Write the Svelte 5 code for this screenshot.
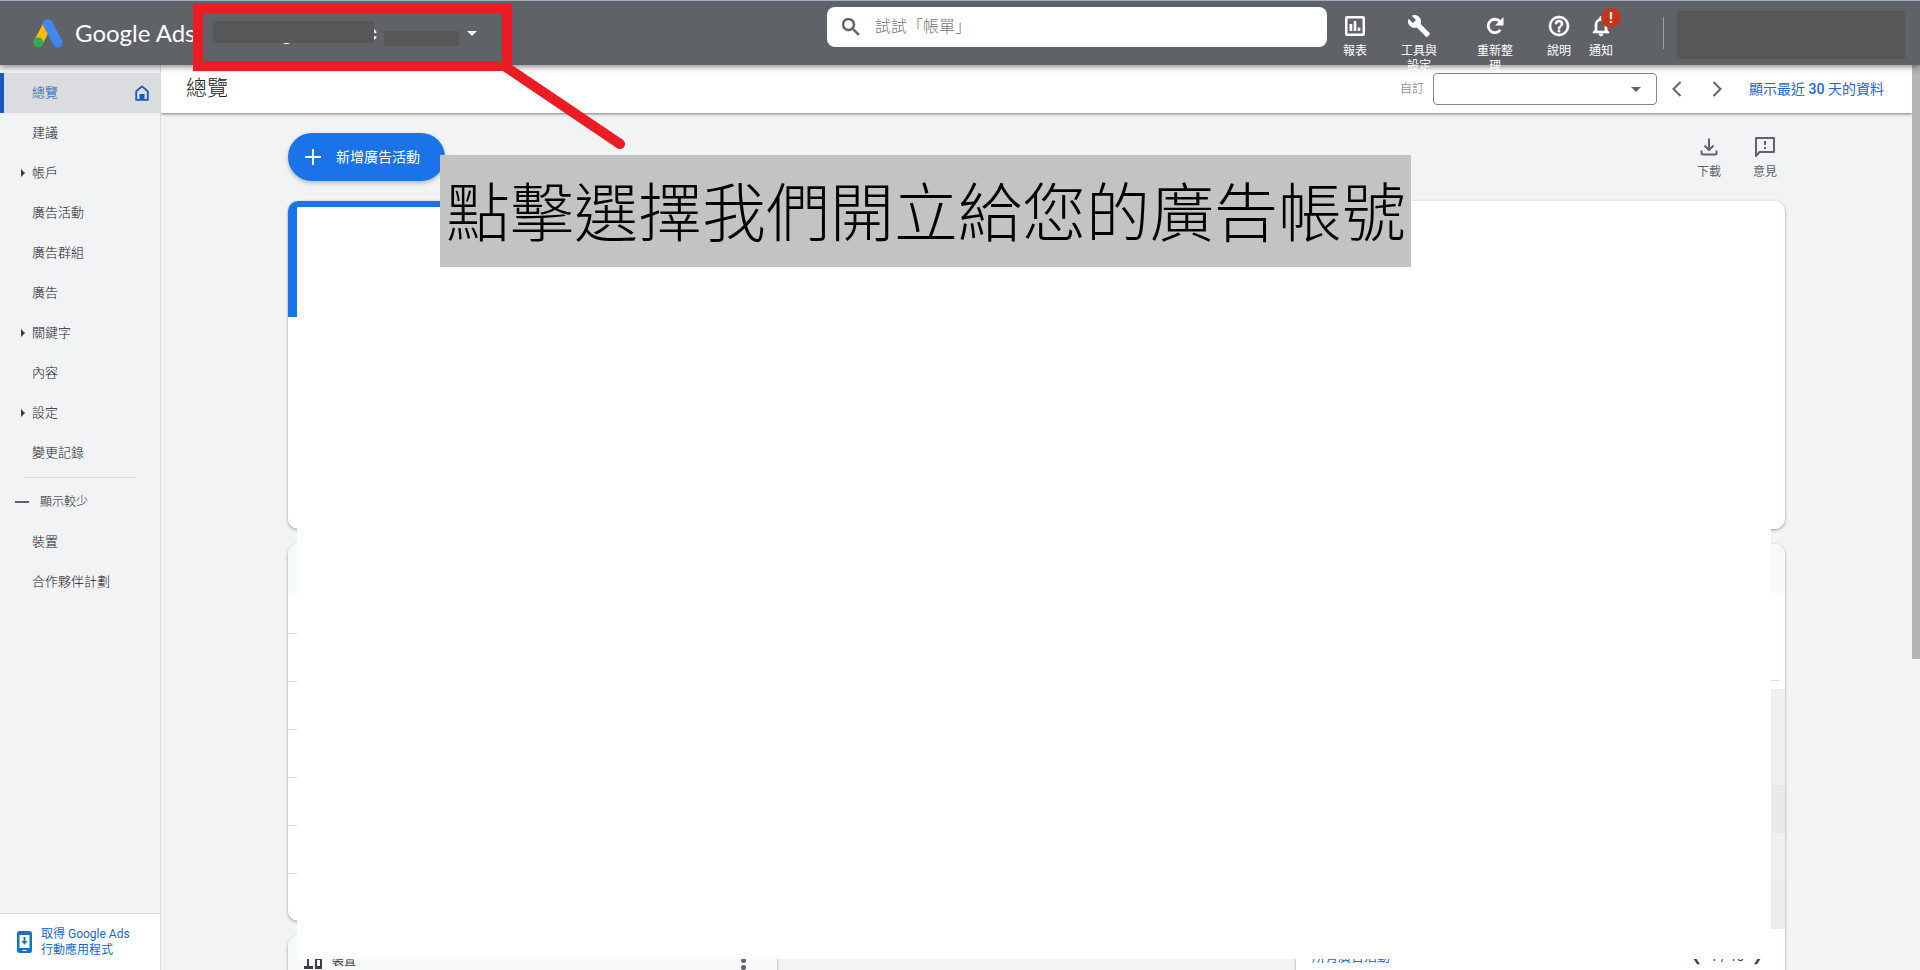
<script lang="ts">
  type NavItem = { label: string; expandable?: boolean; active?: boolean };

  const navItems: NavItem[] = [
    { label: "總覽", active: true },
    { label: "建議" },
    { label: "帳戶", expandable: true },
    { label: "廣告活動" },
    { label: "廣告群組" },
    { label: "廣告" },
    { label: "關鍵字", expandable: true },
    { label: "內容" },
    { label: "設定", expandable: true },
    { label: "變更記錄" },
  ];
  const moreItems: NavItem[] = [{ label: "裝置" }, { label: "合作夥伴計劃" }];
  const tableRows = [1, 2, 3, 4, 5, 6];

  let query = $state("");
  let range = $state("");
</script>

{#snippet navLink(item: NavItem)}
  <a class="nav-item" class:active={item.active} href="#nav">
    <span class="nav-arrow" class:shown={item.expandable}></span>
    <span class="nav-label">{item.label}</span>
    {#if item.active}
      <svg class="home" viewBox="0 0 14 16" width="14" height="16">
        <path d="M1.2 14.8V6.2L7 1.4l5.8 4.8v8.6z" fill="none" stroke="currentColor" stroke-width="1.8" />
        <path d="M4.5 9h5v6h-5z" fill="currentColor" />
      </svg>
    {/if}
  </a>
{/snippet}

<div class="page">
  <header class="topbar">
    <a class="brand" href="#home">
      <svg viewBox="0 0 30 29" width="30" height="29">
        <path d="M14.8 5.2 5.2 23.6" stroke="#fbbc04" stroke-width="9" stroke-linecap="round" />
        <path d="M14.8 5 24.8 23.8" stroke="#4285f4" stroke-width="9.6" stroke-linecap="round" />
        <circle cx="5.2" cy="23.4" r="5" fill="#34a853" />
      </svg>
      <span>Google Ads</span>
    </a>
    <button class="account" aria-label="帳戶">
      <span class="account-name"><span>g</span><span>c</span></span>
      <span class="account-id"></span>
      <span class="caret"></span>
    </button>
    <label class="search">
      <svg viewBox="3 3 18 18" width="18" height="18">
        <path fill="#5f6368" stroke="#5f6368" stroke-width="0.6" d="M15.5 14h-.79l-.28-.27A6.47 6.47 0 0 0 16 9.5 6.5 6.5 0 1 0 9.5 16c1.61 0 3.09-.59 4.23-1.57l.27.28v.79l5 4.99L20.49 19l-4.99-5zm-6 0C7.01 14 5 11.99 5 9.5S7.01 5 9.5 5 14 7.01 14 9.5 11.99 14 9.5 14z" />
      </svg>
      <input type="text" aria-label="搜尋" placeholder="試試「帳單」" bind:value={query} />
    </label>
    <nav class="tools">
      <button class="tool">
        <svg viewBox="0 0 24 24" width="24" height="24">
          <path d="M4 2h16a2 2 0 0 1 2 2v16a2 2 0 0 1-2 2H4a2 2 0 0 1-2-2V4a2 2 0 0 1 2-2zm.5 2.500v15h15v-15z" fill-rule="evenodd" />
          <path d="M6.500 10h2.800v7H6.500zM10.700 7h2.600v10h-2.600zM14.700 13.500h2.600V17h-2.600z" />
        </svg>
        <span>報表</span>
      </button>
      <button class="tool wide">
        <svg viewBox="0 0 24 24" width="24" height="24">
          <path d="M22.7 19l-9.1-9.1c.9-2.3.4-5-1.5-6.9-2-2-5-2.4-7.4-1.3L9 6 6 9 1.6 4.7C.4 7.1.9 10.1 2.9 12.1c1.9 1.9 4.6 2.4 6.9 1.5l9.1 9.1c.4.4 1 .4 1.4 0l2.3-2.3c.5-.4.5-1.1.1-1.4z" />
        </svg>
        <span>工具與設定</span>
      </button>
      <button class="tool wide">
        <svg viewBox="0 0 24 24" width="24" height="24">
          <path d="M17.400 15.800A6.700 6.700 0 1 1 17 7.600" fill="none" stroke="#fff" stroke-width="2.800" />
          <path d="M20.500 3v8.500H12z" />
        </svg>
        <span>重新整理</span>
      </button>
      <button class="tool">
        <svg viewBox="0 0 24 24" width="24" height="24">
          <path stroke="#fff" stroke-width="0.7" d="M11 18h2v-2h-2v2zm1-16a10 10 0 1 0 0 20 10 10 0 0 0 0-20zm0 18c-4.41 0-8-3.59-8-8s3.59-8 8-8 8 3.590 8 8-3.590 8-8 8zm0-14a4 4 0 0 0-4 4h2c0-1.1.9-2 2-2s2 .9 2 2c0 2-3 1.750-3 5h2c0-2.250 3-2.500 3-5a4 4 0 0 0-4-4z" />
        </svg>
        <span>說明</span>
      </button>
      <button class="tool">
        <svg viewBox="0 0 24 24" width="24" height="24">
          <path stroke="#fff" stroke-width="0.7" d="M12 22c1.100 0 2-.9 2-2h-4c0 1.100.9 2 2 2zm6-6v-5c0-3.070-1.630-5.640-4.500-6.320V4a1.500 1.500 0 0 0-3 0v.680C7.640 5.360 6 7.920 6 11v5l-2 2v1h16v-1l-2-2zm-2 1H8v-6c0-2.480 1.510-4.500 4-4.500s4 2.020 4 4.500v6z" />
        </svg>
        <span>通知</span>
        <b class="badge">!</b>
      </button>
    </nav>
    <div class="profile"></div>
  </header>

  <div class="body">
    <aside class="sidebar">
      <nav>
        {#each navItems as item (item.label)}
          {@render navLink(item)}
        {/each}
        <hr />
        <button class="less"><span class="minus"></span>顯示較少</button>
        {#each moreItems as item (item.label)}
          {@render navLink(item)}
        {/each}
      </nav>
      <a class="get-app" href="#app-download">
        <svg viewBox="0 0 15 22" width="15" height="22">
          <rect width="15" height="22" rx="2.500" fill="#1a73c8" />
          <path d="M2.500 4h10v13h-10z" fill="#fff" />
          <path d="M6.600 6h1.800v4h2.200l-3.100 3.800L4.400 10h2.200z" fill="#1a73c8" />
          <path d="M5.500 19h4v1h-4z" fill="#fff" />
        </svg>
        <span>取得 Google Ads<br />行動應用程式</span>
      </a>
    </aside>

    <main>
      <div class="titlebar">
        <h1>總覽</h1>
        <label class="range-label" for="range">自訂</label>
        <span class="range">
          <select id="range" bind:value={range}><option value=""></option></select>
          <span class="caret dark"></span>
        </span>
        <button class="step" aria-label="上一個">
          <svg viewBox="0 0 10 16" width="10" height="16"><path d="M8.500 1 1.500 8l7 7" /></svg>
        </button>
        <button class="step" aria-label="下一個">
          <svg viewBox="0 0 10 16" width="10" height="16"><path d="m1.500 1 7 7-7 7" /></svg>
        </button>
        <a class="last30" href="#last30">顯示最近 <b>30</b> 天的資料</a>
      </div>

      <div class="content">
        <div class="actions">
          <button class="new-campaign">
            <svg viewBox="0 0 18 18" width="18" height="18"><path d="M9 1v16M1 9h16" stroke="#fff" stroke-width="2" /></svg>
            新增廣告活動
          </button>
          <button class="action">
            <svg viewBox="0 0 24 24" width="24" height="24">
              <path d="M12 3.500v11M7.500 10.500l4.500 4.500 4.500-4.500M4.500 15.500V18c0 .8.7 1.500 1.500 1.500h12c.8 0 1.500-.7 1.500-1.500v-2.500" fill="none" stroke="#5f6368" stroke-width="2" />
            </svg>
            下載
          </button>
          <button class="action">
            <svg viewBox="0 0 24 24" width="24" height="24">
              <path d="M3 21V3h18v14H6.500z" fill="none" stroke="#5f6368" stroke-width="2" stroke-linejoin="round" />
              <path d="M11 6h2v4h-2zM11 12h2v2h-2z" fill="#5f6368" />
            </svg>
            意見
          </button>
        </div>

        <div class="cards">
          <section class="card chart"><div class="metric"></div></section>
          <div class="columns">
            <div class="column">
              <section class="card">
                <div class="card-head"></div>
                <div class="table-head"></div>
                {#each tableRows as row (row)}
                  <div class="table-row"></div>
                {/each}
              </section>
              <section class="card">
                <div class="card-head">
                  <svg viewBox="0 0 18 18" width="18" height="18">
                    <path d="M3 2h13v2H5v10h4v3H0v-3h3zM11 6h7v11h-7zm2 2v6h3V8z" fill="#3c4043" fill-rule="evenodd" />
                  </svg>
                  裝置
                  <button class="more" aria-label="更多"><i></i><i></i><i></i></button>
                </div>
              </section>
            </div>
            <div class="column"></div>
            <div class="column">
              <section class="card">
                <div class="card-head"></div>
                <div class="heat-tabs"></div>
                <div class="heat tall"></div>
                <div class="heat deep"></div>
                <div class="heat"></div>
                <div class="heat mid"></div>
                <div class="card-foot">
                  <a href="#campaigns">所有廣告活動</a>
                  <span class="pager"><span>❮</span> 1 / 10 <span>❯</span></span>
                </div>
              </section>
            </div>
          </div>
          <div class="cover"></div>
        </div>
      </div>
    </main>
    <div class="scrollbar"><div class="thumb"></div></div>
  </div>

  <div class="highlight"></div>
  <svg class="pointer" viewBox="0 0 130 90" width="130" height="90">
    <path d="M6 2 120 79" stroke="#ec1c24" stroke-width="10" stroke-linecap="round" />
  </svg>
  <p class="callout">點擊選擇我們開立給您的廣告帳號</p>
</div>

<style>
  :global(body) {
    margin: 0;
    overflow: hidden;
  }
  .page {
    position: relative;
    display: flex;
    flex-direction: column;
    height: 100vh;
    overflow: hidden;
    background: #f1f3f4;
    color: #3c4043;
    font: 12px/16px Roboto, "Noto Sans CJK TC", sans-serif;
  }
  .page * { box-sizing: border-box; }
  button {
    padding: 0;
    border: 0;
    background: none;
    color: inherit;
    font: inherit;
    cursor: pointer;
  }
  a {
    color: #1967d2;
    text-decoration: none;
  }
  svg {
    display: block;
    flex: none;
  }

  .topbar {
    position: relative;
    z-index: 2;
    display: flex;
    flex: none;
    height: 65px;
    padding-right: 15px;
    border-top: 1px solid #a3adc0;
    background: #5f6368;
    box-shadow: 0 2px 6px rgba(0, 0, 0, 0.45);
    color: #fff;
  }
  .brand {
    display: flex;
    align-items: center;
    gap: 12px;
    width: 213px;
    padding-left: 33px;
    color: #fff;
    font: 24px/32px Lato, sans-serif;
    white-space: nowrap;
  }
  .brand svg { fill: none; }
  .account {
    display: flex;
    align-items: center;
    height: 64px;
  }
  .account-name {
    position: relative;
    display: flex;
    justify-content: space-between;
    width: 164px;
    height: 24px;
    padding-left: 68px;
    font-size: 20px;
    font-weight: 500;
    line-height: 24px;
  }
  .account-name::after {
    content: "";
    position: absolute;
    inset: 0 3px 2px 0;
    background: #575757;
  }
  .account-id {
    width: 75px;
    height: 15px;
    margin: 10px 8px 0 7px;
    background: #575757;
  }
  .caret {
    border: 5px solid transparent;
    border-top-color: #fff;
    border-bottom: 0;
  }
  .caret.dark { border-top-color: #5f6368; }
  .search {
    display: flex;
    align-items: center;
    gap: 15px;
    width: 500px;
    height: 40px;
    margin: 6px 0 0 auto;
    padding: 0 15px;
    border-radius: 8px;
    background: #fff;
  }
  .search input {
    flex: 1;
    padding: 0;
    border: 0;
    outline: 0;
    background: none;
    font: 300 16px/24px Roboto, "Noto Sans CJK TC", sans-serif;
  }
  .search input::placeholder { color: #757575; opacity: 1; }
  .tools {
    display: flex;
    gap: 18px;
    width: 336px;
    padding: 13px 0 0 16px;
  }
  .tool {
    position: relative;
    display: flex;
    flex-direction: column;
    align-items: center;
    gap: 6px;
    width: 24px;
    height: 48px;
    line-height: 15px;
  }
  .tool.wide {
    width: 36px;
    margin-left: 16px;
    margin-right: 6px;
  }
  .tool.wide + .tool.wide { margin-right: 16px; }
  .tool svg { fill: #fff; }
  .badge {
    position: absolute;
    top: -6px;
    left: 12px;
    width: 20px;
    height: 20px;
    border-radius: 50%;
    background: #c5341f;
    font-size: 14px;
    line-height: 20px;
    text-align: center;
  }
  .profile {
    width: 242px;
    margin: 16px 0;
    border-left: 1px solid #9aa0a6;
  }
  .profile::after {
    content: "";
    display: block;
    height: 48px;
    margin: -6px 0 0 13px;
    background: #575757;
  }

  .body {
    display: flex;
    flex: 1;
    min-height: 0;
  }
  .sidebar {
    display: flex;
    flex: none;
    flex-direction: column;
    justify-content: space-between;
    width: 161px;
    padding-top: 8px;
    border-right: 1px solid #dadce0;
  }
  .nav-item {
    display: flex;
    align-items: center;
    height: 40px;
    padding-right: 11px;
    border-left: 4px solid transparent;
    color: #202124;
    font-size: 13px;
    font-weight: 300;
  }
  .nav-item.active {
    border-color: #185abc;
    background: #dadce0;
    color: #185abc;
  }
  .nav-arrow { width: 28px; }
  .nav-arrow.shown::before {
    content: "";
    display: block;
    width: 0;
    margin-left: 17px;
    border: 4px solid transparent;
    border-left-color: #3c4043;
    border-right: 0;
  }
  .nav-label { flex: 1; }
  hr {
    height: 1px;
    margin: 4px 24px;
    border: 0;
    background: #dadce0;
  }
  .less {
    display: flex;
    align-items: center;
    gap: 11px;
    height: 40px;
    padding-left: 15px;
    color: #202124;
    font-weight: 300;
  }
  .minus {
    width: 14px;
    height: 2px;
    background: #5f6368;
  }
  .get-app {
    display: flex;
    align-items: center;
    gap: 9px;
    height: 57px;
    padding-left: 17px;
    border-top: 1px solid #dadce0;
    background: #fff;
  }

  main {
    display: flex;
    flex: 1;
    flex-direction: column;
    min-width: 0;
    overflow: hidden;
  }
  .titlebar {
    display: flex;
    flex: none;
    align-items: center;
    height: 48px;
    padding: 0 28px 0 25px;
    background: #fff;
    box-shadow: 0 1px 3px rgba(0, 0, 0, 0.5);
  }
  h1 {
    margin: 0 auto 2px 0;
    font-size: 21px;
    font-weight: 300;
    line-height: 28px;
    color: #202124;
  }
  .range-label {
    color: #5f6368;
    font-weight: 300;
  }
  .range {
    display: flex;
    align-items: center;
    width: 224px;
    height: 32px;
    margin: 0 15px 0 9px;
    padding-right: 15px;
    border: 1px solid #80868b;
    border-radius: 4px;
  }
  .range select {
    flex: 1;
    height: 30px;
    border: 0;
    background: none;
    appearance: none;
  }
  .step { width: 10px; margin-right: 30px; }
  .step + .step { margin-right: 27px; }
  .step path {
    fill: none;
    stroke: #5f6368;
    stroke-width: 2;
  }
  .last30 { font-size: 14px; }
  .last30 b { font-weight: 500; }

  .content {
    width: calc(100% - 254px);
    margin: 0 auto;
    padding-top: 20px;
  }
  .actions {
    display: flex;
    gap: 32px;
    height: 68px;
    padding-right: 8px;
  }
  .new-campaign {
    display: flex;
    align-items: center;
    gap: 14px;
    height: 48px;
    margin-right: auto;
    padding: 0 25px 0 16px;
    border-radius: 24px;
    background: #1a73e8;
    box-shadow: 0 2px 4px rgba(0, 0, 0, 0.25);
    color: #fff;
    font-size: 14px;
  }
  .action {
    display: flex;
    flex-direction: column;
    align-items: center;
    gap: 5px;
    padding-top: 2px;
    color: #5f6368;
  }
  .cards {
    position: relative;
    display: flex;
    flex-direction: column;
    gap: 15px;
  }
  .card {
    overflow: hidden;
    border-radius: 10px;
    background: #fff;
    box-shadow: 0 1px 3px rgba(60, 64, 67, 0.5);
  }
  .chart { height: 328px; }
  .metric {
    width: 25%;
    height: 116px;
    background: #1a73e8;
  }
  .columns {
    display: grid;
    grid-template-columns: repeat(3, 1fr);
    gap: 15px;
  }
  .column {
    display: flex;
    flex-direction: column;
    gap: 15px;
  }
  .card-head {
    display: flex;
    align-items: center;
    gap: 10px;
    height: 49px;
    padding: 0 31px 0 16px;
    background: #f8f9fa;
  }
  .table-head { height: 40px; }
  .table-row {
    height: 48px;
    border-top: 1px solid #dadce0;
  }
  .more {
    display: flex;
    flex-direction: column;
    gap: 2px;
    margin-left: auto;
  }
  .more i {
    width: 5px;
    height: 5px;
    border-radius: 50%;
    background: #5f6368;
  }
  .heat-tabs {
    height: 88px;
    margin: 0 6px 8px;
    border-bottom: 1px solid #dadce0;
  }
  .heat {
    height: 48px;
    background: #efefef;
  }
  .heat.tall { height: 96px; }
  .heat.deep { background: #e9e9e9; }
  .heat.mid { background: #ececec; }
  .card-foot {
    display: flex;
    align-items: center;
    justify-content: space-between;
    height: 56px;
    padding: 0 22px 0 16px;
    font-size: 13px;
  }
  .pager {
    display: flex;
    gap: 8px;
  }
  /* blank sheet over the account's figures */
  .cover {
    position: absolute;
    top: 6px;
    left: 9px;
    right: 14px;
    height: 752px;
    background: #fff;
  }
  .scrollbar {
    flex: none;
    width: 8px;
  }
  .thumb {
    height: calc(100% - 311px);
    background: #b1b3b4;
  }

  .highlight {
    position: absolute;
    z-index: 3;
    top: 3px;
    left: 193px;
    width: 319px;
    height: 68px;
    border: 10px solid #ec1c24;
  }
  .pointer {
    position: absolute;
    z-index: 3;
    top: 65px;
    left: 500px;
  }
  .callout {
    position: absolute;
    z-index: 3;
    top: 155px;
    left: 440px;
    margin: 0;
    padding: 5px 5px 11px 6px;
    background: #c3c3c3;
    color: #000;
    font: 300 64px/96px "Noto Sans CJK TC", sans-serif;
    white-space: nowrap;
  }
</style>
